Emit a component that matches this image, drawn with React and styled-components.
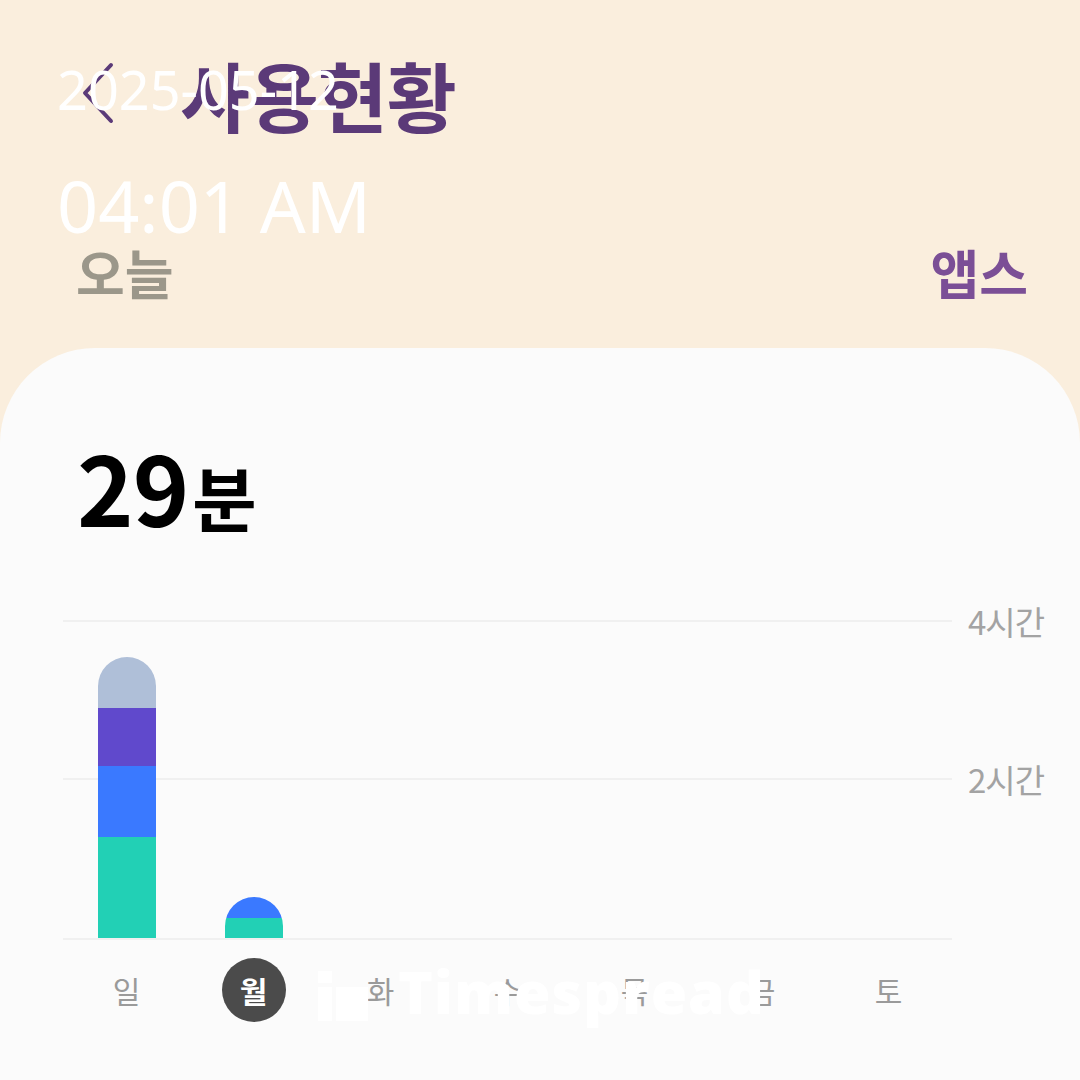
import styled, { createGlobalStyle } from 'styled-components';

const GlobalStyle = createGlobalStyle`
	html, body {
		margin: 0;
		padding: 0;
		background: #faeedd;
	}
	body {
		font-family: 'Noto Sans CJK KR', 'Noto Sans', sans-serif;
	}
`;

const days = ['일', '월', '화', '수', '목', '금', '토'];

// segment heights in px, bottom to top
const usage = [
	[
		{ h: 101, color: '#22d0b5' },
		{ h: 71, color: '#3a79ff' },
		{ h: 58, color: '#6049cc' },
		{ h: 51, color: '#afbfd8' },
	],
	[
		{ h: 20, color: '#22d0b5' },
		{ h: 21, color: '#3a79ff' },
	],
	[],
	[],
	[],
	[],
	[],
];

export default function App() {
	return (
		<>
			<GlobalStyle />
			<Page>
				<Header>
					<BackButton>
						<svg width="40" height="70" viewBox="0 0 40 70">
							<polyline
								points="31,6 5,34 31,62"
								fill="none"
								stroke="#5b3a78"
								strokeWidth="4"
								strokeLinecap="round"
								strokeLinejoin="round"
							/>
						</svg>
					</BackButton>
					<Title>사용현황</Title>
				</Header>
				<Tabs>
					<Tab>오늘</Tab>
					<Tab active>앱스</Tab>
				</Tabs>
				<Card>
					<Total>
						29<small>분</small>
					</Total>
					<ChartRow>
						<Plot>
							{usage.map((segs, i) => (
								<BarSlot key={i}>
									{segs.length > 0 && (
										<Bar>
											{segs
												.slice()
												.reverse()
												.map((s, j) => (
													<Segment
														key={j}
														color={s.color}
														style={{ height: s.h }}
													/>
												))}
										</Bar>
									)}
								</BarSlot>
							))}
						</Plot>
						<AxisLabels>
							<AxisLabel>4시간</AxisLabel>
							<AxisLabel>2시간</AxisLabel>
						</AxisLabels>
					</ChartRow>
					<DayRow>
						{days.map((d, i) => (
							<Day key={d} selected={i === 1}>
								{d}
							</Day>
						))}
					</DayRow>
				</Card>
				<Stamp>
					<div>2025-05-12</div>
					<div className="time">04:01 AM</div>
				</Stamp>
				<Watermark>
					<svg width="50" height="50" viewBox="0 0 50 50">
						<rect x="0" y="0" width="14" height="12" fill="#fff" />
						<rect x="0" y="16" width="14" height="34" fill="#fff" />
						<rect x="18" y="16" width="32" height="34" fill="#fff" />
					</svg>
					<span>Timespread</span>
				</Watermark>
			</Page>
		</>
	);
}

const Page = styled.div`
	position: relative;
	display: flex;
	flex-direction: column;
	width: 1080px;
	height: 1080px;
	overflow: hidden;
	background: #faeedd;
`;

const Header = styled.div`
	display: flex;
	align-items: center;
	height: 76px;
	padding: 56px 0 0 80px;
`;

const BackButton = styled.div`
	width: 40px;
	height: 70px;
	margin-right: 60px;
	display: flex;
	align-items: center;
`;

const Title = styled.div`
	font-size: 76px;
	line-height: 76px;
	font-weight: 700;
	color: #5b3a78;
	letter-spacing: -1px;
`;

const Tabs = styled.div`
	display: flex;
	justify-content: space-between;
	padding: 0 52px 0 76px;
	margin-top: 114px;
`;

const Tab = styled.div`
	font-size: 53px;
	line-height: 52px;
	font-weight: 700;
	color: ${(p) => (p.active ? '#7b4f96' : '#9b978a')};
`;

const Card = styled.div`
	flex: 1;
	margin-top: 50px;
	background: #fbfbfb;
	border-radius: 95px 95px 0 0;
	padding-top: 91px;
`;

const Total = styled.div`
	padding-left: 77px;
	font-size: 96px;
	line-height: 94px;
	font-weight: 700;
	color: #000;
	letter-spacing: -1px;

	small {
		font-size: 70px;
		margin-left: 4px;
	}
`;

const ChartRow = styled.div`
	display: flex;
	align-items: flex-start;
	margin: 76px 0 0 63px;
`;

const Plot = styled.div`
	display: grid;
	grid-template-columns: repeat(7, 127px);
	align-items: end;
	width: 889px;
	height: 316px;
	border-top: 2px solid #f0f0f0;
	border-bottom: 2px solid #f0f0f0;
	background: linear-gradient(#f0f0f0, #f0f0f0) 0 156px / 100% 2px no-repeat;
`;

const BarSlot = styled.div`
	display: flex;
	justify-content: center;
	align-items: flex-end;
	height: 100%;
`;

const Bar = styled.div`
	width: 58px;
	display: flex;
	flex-direction: column;
	border-radius: 29px 29px 0 0;
	overflow: hidden;
`;

const Segment = styled.div`
	background: ${(p) => p.color};
`;

const AxisLabels = styled.div`
	display: flex;
	flex-direction: column;
	gap: 118px;
	margin: -19px 0 0 16px;
`;

const AxisLabel = styled.div`
	font-size: 33px;
	line-height: 40px;
	color: #a3a3a3;
	letter-spacing: -1px;
`;

const DayRow = styled.div`
	display: grid;
	grid-template-columns: repeat(7, 127px);
	margin: 18px 0 0 63px;
`;

const Day = styled.div`
	justify-self: center;
	width: 64px;
	height: 64px;
	border-radius: 50%;
	display: flex;
	align-items: center;
	justify-content: center;
	font-size: 30px;
	font-weight: ${(p) => (p.selected ? 700 : 400)};
	color: ${(p) => (p.selected ? '#fff' : '#9a9a9a')};
	background: ${(p) => (p.selected ? '#4b4b4b' : 'transparent')};
`;

const Stamp = styled.div`
	position: absolute;
	left: 57px;
	top: 63px;
	display: flex;
	flex-direction: column;
	gap: 54px;
	font-family: 'Noto Sans', sans-serif;
	font-size: 54px;
	line-height: 53px;
	color: #fff;

	.time {
		font-size: 72px;
		line-height: 71px;
	}
`;

const Watermark = styled.div`
	position: absolute;
	left: 318px;
	top: 962px;
	display: flex;
	align-items: flex-end;
	gap: 30px;
	color: #fff;

	span {
		font-family: 'Open Sans', sans-serif;
		font-weight: 800;
		font-size: 59px;
		line-height: 59px;
		letter-spacing: 1px;
	}
`;
